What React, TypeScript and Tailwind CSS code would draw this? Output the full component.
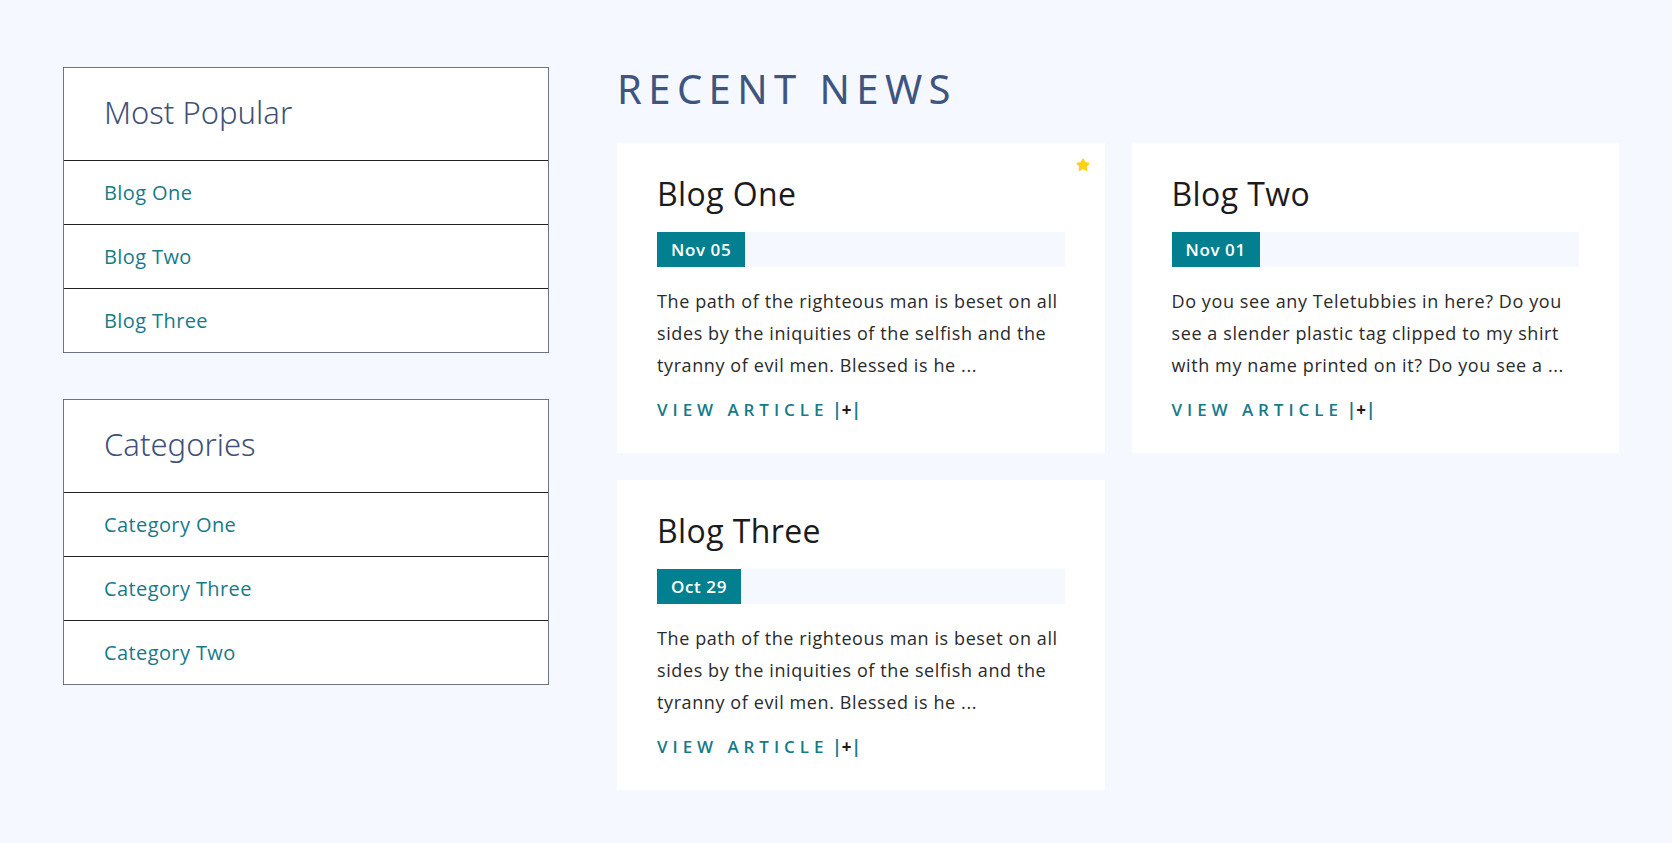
import { Star } from 'lucide-react';

const body = { fontFamily: '"Open Sans", "Liberation Sans", sans-serif' };
const heading = { fontFamily: '"Noto Sans", "Open Sans", sans-serif' };

const popular = ['Blog One', 'Blog Two', 'Blog Three'];
const categories = ['Category One', 'Category Three', 'Category Two'];

const posts = [
  {
    title: 'Blog One',
    date: 'Nov 05',
    featured: true,
    excerpt:
      'The path of the righteous man is beset on all sides by the iniquities of the selfish and the tyranny of evil men. Blessed is he ...',
  },
  {
    title: 'Blog Two',
    date: 'Nov 01',
    featured: false,
    excerpt:
      'Do you see any Teletubbies in here? Do you see a slender plastic tag clipped to my shirt with my name printed on it? Do you see a ...',
  },
  {
    title: 'Blog Three',
    date: 'Oct 29',
    featured: false,
    excerpt:
      'The path of the righteous man is beset on all sides by the iniquities of the selfish and the tyranny of evil men. Blessed is he ...',
  },
];

function SideBox({ title, items }: { title: string; items: string[] }) {
  return (
    <div className="bg-white border border-[#6b7587]">
      <div className="h-[92px] flex items-center px-10 pb-1">
        <h2 className="text-[31px] font-light text-[#3f5178]" style={heading}>
          {title}
        </h2>
      </div>
      {items.map((item) => (
        <a
          key={item}
          href="#"
          className="h-16 flex items-center px-10 border-t border-[#1f2328] text-[20px] tracking-[0.4px] text-[#167b88]"
          style={body}
        >
          {item}
        </a>
      ))}
    </div>
  );
}

function PostCard({ post }: { post: (typeof posts)[number] }) {
  return (
    <div className="relative bg-white px-10 pt-8 pb-[31px]">
      {post.featured && (
        <Star size={14} className="absolute top-[15px] right-[15px] text-[#fcd116] fill-[#fcd116]" />
      )}
      <h3 className="text-[32px] leading-[38px] tracking-[0.4px] text-[#1b1b1b]" style={body}>
        {post.title}
      </h3>
      <div className="mt-[19px] h-[35px] bg-[#f5f9ff] flex">
        <span
          className="bg-[#03808f] text-white font-semibold text-[17px] tracking-[0.6px] px-[14px] flex items-center"
          style={body}
        >
          {post.date}
        </span>
      </div>
      <p className="mt-[18px] text-[18px] leading-8 tracking-[0.6px] text-[#2a2a2a]" style={body}>
        {post.excerpt}
      </p>
      <a
        href="#"
        className="mt-[17px] inline-flex items-center text-[17px] leading-6 font-semibold tracking-[0.29em] text-[#167b88]"
        style={body}
      >
        VIEW ARTICLE
        <span className="tracking-normal ml-1 font-bold">
          |<span className="text-[#1b1b1b]">+</span>|
        </span>
      </a>
    </div>
  );
}

export default function App() {
  return (
    <div className="min-h-screen bg-[#f5f9ff] pl-[63px] pr-[53px] pt-[67px] pb-12 flex gap-[68px]">
      <aside className="w-[486px] shrink-0 flex flex-col gap-[46px]">
        <SideBox title="Most Popular" items={popular} />
        <SideBox title="Categories" items={categories} />
      </aside>
      <main className="flex-1">
        <h1
          className="-mt-[2px] text-[40px] leading-[48px] tracking-[0.16em] text-[#3f557f] font-normal"
          style={heading}
        >
          RECENT NEWS
        </h1>
        <div className="mt-[30px] grid grid-cols-2 gap-[27px]">
          {posts.map((p) => (
            <PostCard key={p.title} post={p} />
          ))}
        </div>
      </main>
    </div>
  );
}
